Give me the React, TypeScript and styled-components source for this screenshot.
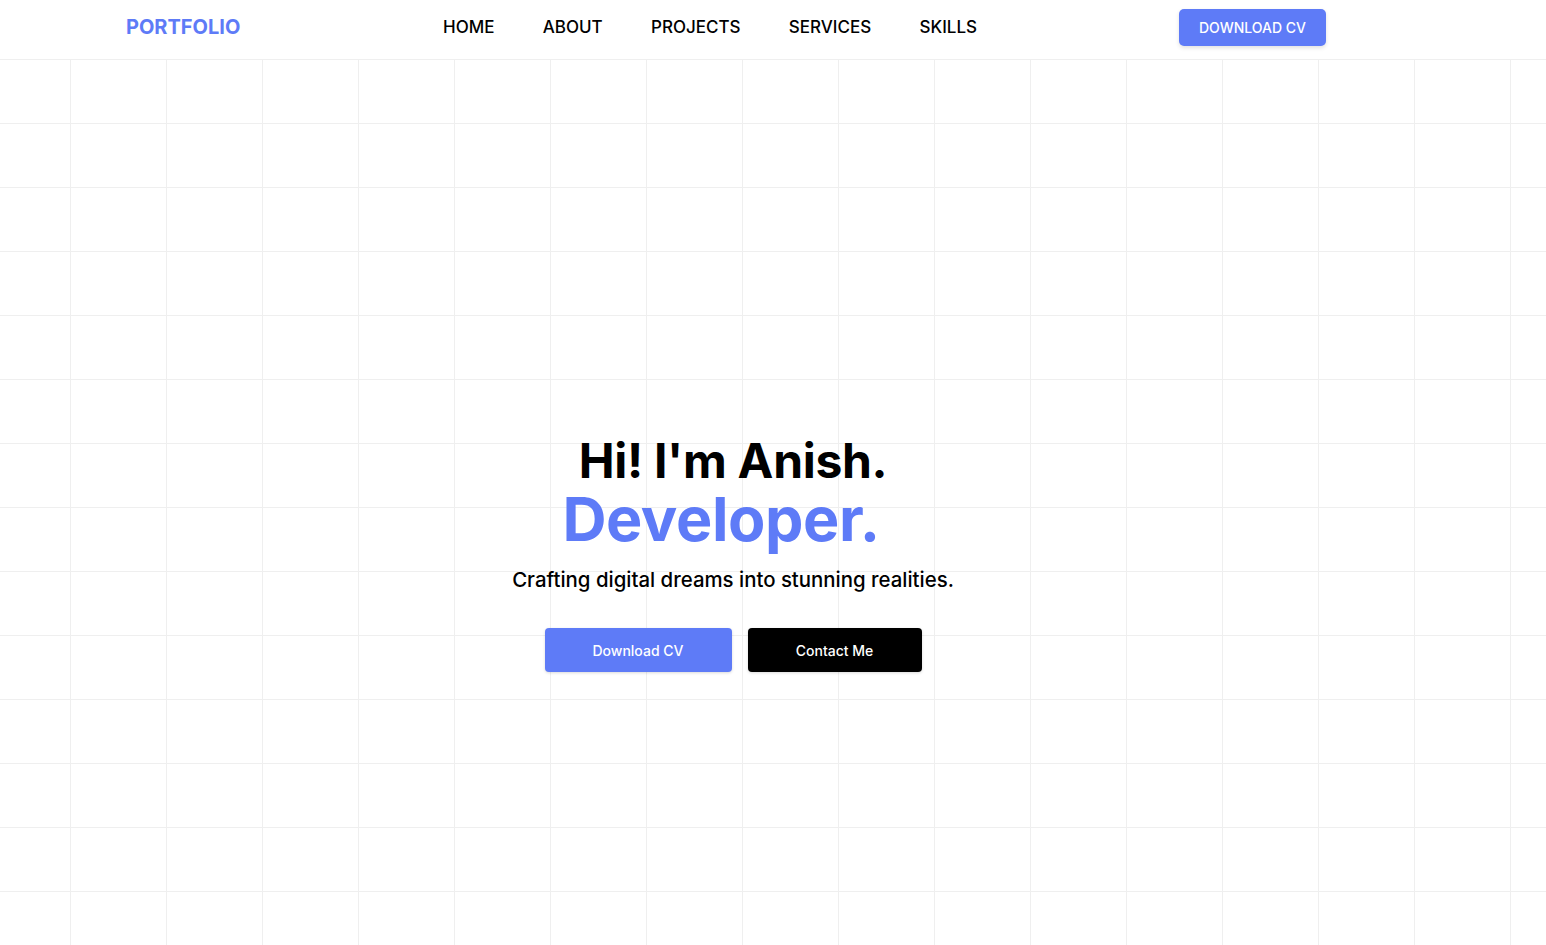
import React from "react";
import styled, { createGlobalStyle } from "styled-components";

const BLUE = "#5e7bf7";

const Global = createGlobalStyle`
  html, body { margin: 0; padding: 0; background: #fff; }
  body { font-family: Inter, "Noto Sans", sans-serif; color: #000; }
  * { box-sizing: border-box; }
`;

const Page = styled.div`
  min-height: 945px;
  display: flex;
  flex-direction: column;
`;

const Header = styled.header`
  height: 60px;
  border-bottom: 1px solid #efefef;
  display: flex;
  align-items: center;
  padding: 0 220px 5px 126px;
  background: #fff;
`;

const Logo = styled.div`
  font-size: 20px;
  font-weight: 700;
  color: ${BLUE};
  width: 317px;
`;

const Nav = styled.nav`
  display: flex;
  gap: 48.3px;
  flex: 1;
`;

const NavLink = styled.a`
  font-size: 17px;
  font-weight: 500;
  color: #000;
  text-decoration: none;
`;

const HeaderButton = styled.button`
  height: 37px;
  width: 147px;
  border: none;
  border-radius: 5px;
  background: ${BLUE};
  color: #fff;
  font-family: inherit;
  font-size: 14px;
  font-weight: 500;
  box-shadow: 0 2px 4px rgba(0, 0, 0, 0.12);
  cursor: pointer;
`;

const Hero = styled.main`
  flex: 1;
  background-color: #fff;
  background-image:
    linear-gradient(to right, #efefef 1px, transparent 1px),
    linear-gradient(to bottom, #efefef 1px, transparent 1px);
  background-size: 96px 64px;
  background-position: 70px 63px;
  display: flex;
  flex-direction: column;
  align-items: center;
  padding: 375px 80px 0 0;
`;

const Title = styled.h1`
  margin: 0;
  font-size: 48px;
  line-height: 52px;
  font-weight: 700;
  letter-spacing: -0.3px;
`;

const Role = styled.h2`
  margin: 0;
  padding-right: 24px;
  font-size: 61px;
  line-height: 64px;
  font-weight: 700;
  color: ${BLUE};
  letter-spacing: -0.4px;
`;

const Tagline = styled.p`
  margin: 15px 0 0;
  font-size: 20.4px;
  font-weight: 500;
  line-height: 28px;
`;

const Actions = styled.div`
  display: flex;
  gap: 16px;
  margin-top: 34px;
`;

const ActionButton = styled.button<{ $dark?: boolean }>`
  height: 44px;
  width: ${(p) => (p.$dark ? "174px" : "187px")};
  border: none;
  border-radius: 4px;
  background: ${(p) => (p.$dark ? "#000" : BLUE)};
  color: #fff;
  font-family: inherit;
  font-size: 14px;
  font-weight: 500;
  box-shadow: 0 1px 3px rgba(0, 0, 0, 0.15);
  cursor: pointer;
`;

export default function App() {
  return (
    <Page>
      <Global />
      <Header>
        <Logo>PORTFOLIO</Logo>
        <Nav>
          {["HOME", "ABOUT", "PROJECTS", "SERVICES", "SKILLS"].map((n) => (
            <NavLink key={n} href="#">
              {n}
            </NavLink>
          ))}
        </Nav>
        <HeaderButton>DOWNLOAD CV</HeaderButton>
      </Header>
      <Hero>
        <Title>Hi! I'm Anish.</Title>
        <Role>Developer.</Role>
        <Tagline>Crafting digital dreams into stunning realities.</Tagline>
        <Actions>
          <ActionButton>Download CV</ActionButton>
          <ActionButton $dark>Contact Me</ActionButton>
        </Actions>
      </Hero>
    </Page>
  );
}
